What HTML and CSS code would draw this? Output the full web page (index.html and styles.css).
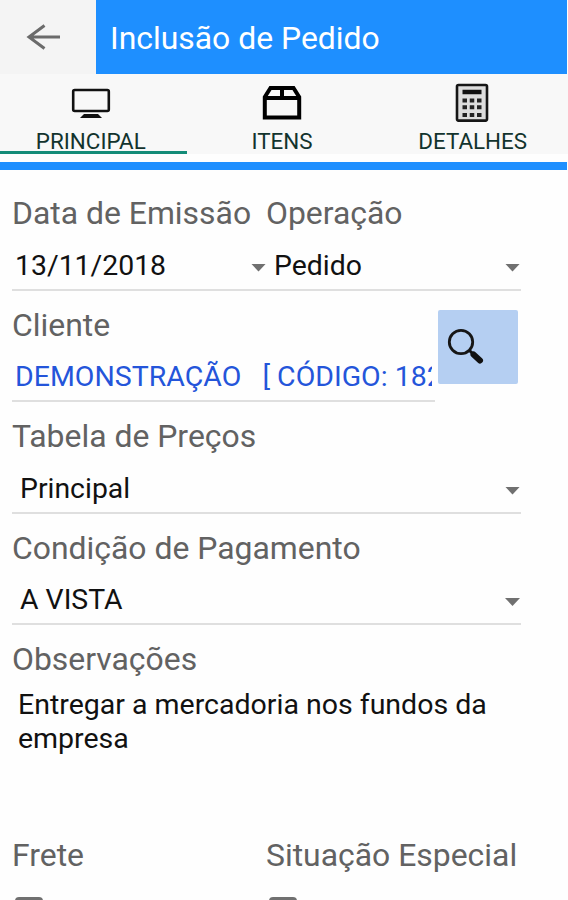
FILE: index.html
```
<!DOCTYPE html>
<html lang="pt-br">

<head>
    <meta charset="UTF-8">
    <meta name="viewport" content="width=device-width, initial-scale=1.0">
    <title>Inclusão de Pedido</title>
    <link rel="stylesheet" href="styles.css">
</head>

<body>
    <div class="header">
        <div class="back">
            <svg width="36" height="28" viewBox="0 0 36 28">
                <path d="M34 14H3M18.5 2.5L3 14L18.5 25.5" fill="none" stroke="#6b6b6b" stroke-width="3" />
            </svg>
        </div>
        <div class="title">Inclusão de Pedido</div>
    </div>
    <div class="tabs">
        <div class="tab tab-active">
            <svg class="tab-icon" width="40" height="40" viewBox="0 0 40 40">
                <rect x="2.2" y="7" width="35.6" height="21" rx="1.5" fill="none" stroke="#111" stroke-width="2.6" />
                <path d="M13 31H27L31 35H9Z" fill="#111" />
            </svg>
            <span class="tab-text">PRINCIPAL</span>
        </div>
        <div class="tab">
            <svg class="tab-icon" width="40" height="40" viewBox="0 0 40 40">
                <path d="M2.8 34.5V14L8.5 5H31.5L37.2 14V34.5Z M2.8 15H37.2M20 5V15" fill="none" stroke="#000" stroke-width="4" />
            </svg>
            <span class="tab-text">ITENS</span>
        </div>
        <div class="tab">
            <svg class="tab-icon" width="40" height="40" viewBox="0 0 40 40">
                <rect x="4" y="2" width="30" height="35.6" rx="1.5" fill="#ddd" stroke="#161616" stroke-width="2.6" />
                <path d="M9.5 9H28.5" stroke="#111" stroke-width="4.5" />
                <path d="M9.5 17.5H28.5M9.5 24.3H28.5M9.5 32H28.5" stroke="#222" stroke-width="4" stroke-dasharray="4.5 2.75" />
            </svg>
            <span class="tab-text">DETALHES</span>
        </div>
    </div>
    <div class="bar"></div>

    <div class="form">
        <div class="field field-double">
            <div class="col-left">
                <div class="label">Data de Emissão</div>
                <div class="value value-data"><span>13/11/2018</span><i class="arrow"></i></div>
            </div>
            <div class="col-right">
                <div class="label">Operação</div>
                <div class="value value-select"><span>Pedido</span><i class="arrow"></i></div>
            </div>
        </div>
        <div class="client">
            <div class="field field-client">
                <div class="label">Cliente</div>
                <div class="value value-client"><span>DEMONSTRAÇÃO&nbsp;&nbsp; [ CÓDIGO: 182</span></div>
            </div>
            <button class="btn-search">
                <svg width="38" height="38" viewBox="0 0 38 38">
                    <circle cx="14" cy="14" r="11.7" fill="none" stroke="#161616" stroke-width="2.8" />
                    <path d="M22 22L27 27" stroke="#111" stroke-width="3" />
                    <path d="M26.5 26.5L33 32.5" stroke="#111" stroke-width="6" stroke-linecap="round" />
                </svg>
            </button>
        </div>
        <div class="field">
            <div class="label">Tabela de Preços</div>
            <div class="value value-select"><span>Principal</span><i class="arrow"></i></div>
        </div>
        <div class="field">
            <div class="label">Condição de Pagamento</div>
            <div class="value value-select"><span>A VISTA</span><i class="arrow"></i></div>
        </div>
        <div class="notes">
            <div class="label">Observações</div>
            <div class="notes-text">Entregar a mercadoria nos fundos da empresa</div>
        </div>
        <div class="options">
            <div class="col-left">
                <div class="label">Frete</div>
                <span class="checkbox"></span>
            </div>
            <div class="col-right">
                <div class="label">Situação Especial</div>
                <span class="checkbox"></span>
            </div>
        </div>
    </div>
</body>

</html>
```
FILE: styles.css
```
* {
    margin: 0;
    padding: 0;
    box-sizing: border-box;
}

body {
    height: 900px;
    overflow: hidden;
    background-color: #fefefe;
    font-family: Roboto, "Liberation Sans", sans-serif;
}

/* header */
.header {
    display: flex;
    height: 74px;
    padding-right: 1px;
}

.back {
    width: 96px;
    padding: 23px 0 0 26px;
    background-color: #f4f4f4;
}

.title {
    flex: 1;
    padding-left: 14px;
    line-height: 77px;
    font-size: 31.9px;
    color: #fff;
    background-color: #1e8fff;
}

/* tabs */
.tabs {
    display: flex;
    height: 80px;
    background-color: #f8f8f8;
}

.tab {
    display: flex;
    flex-direction: column;
    align-items: center;
    width: 191px;
    padding-top: 9px;
}

.tab-active {
    width: 187px;
    padding-right: 5px;
    border-bottom: 3px solid #148c78;
}

.tab-icon {
    flex: none;
}

.tab-text {
    line-height: 36px;
    font-size: 22.4px;
    color: #12332d;
}

.bar {
    height: 8px;
    margin: 8px 1px 0 0;
    background-color: #1e8fff;
}

/* form */
.form {
    padding: 9px 47px 0 12px;
}

.field {
    height: 111.5px;
    border-bottom: 2px solid #dfdfdf;
}

.field-double,
.options {
    display: flex;
}

.col-left {
    width: 254px;
}

.col-right {
    flex: 1;
}

.label {
    height: 64px;
    line-height: 68.6px;
    font-size: 31.9px;
    color: #626262;
    white-space: nowrap;
}

.value {
    display: flex;
    justify-content: space-between;
    align-items: center;
    height: 44px;
    font-size: 28.4px;
    color: #111;
    white-space: nowrap;
}

.value-data {
    padding-left: 3px;
}

.value-select {
    padding-left: 8px;
}

.arrow {
    width: 15px;
    height: 8px;
    margin: 5px 1px 0 0;
    background-color: #707070;
    clip-path: polygon(0 0, 100% 0, 50% 100%);
}

.value-data .arrow {
    margin-right: 0;
}

.client {
    display: flex;
}

.field-client {
    width: 423px;
}

/* long names are cut at the end of the field */
.value-client {
    width: 417px;
    margin-left: 3px;
    overflow: hidden;
    font-size: 28.5px;
    color: #2455da;
}

.btn-search {
    display: flex;
    align-items: flex-start;
    width: 80px;
    height: 74px;
    margin: 19px 0 0 3px;
    padding: 18px 0 0 9px;
    border: none;
    border-radius: 2px;
    background-color: #b5cff2;
}

.notes {
    height: 196px;
}

.notes .label {
    height: 63px;
}

.notes-text {
    width: 490px;
    padding-left: 6px;
    line-height: 33.5px;
    font-size: 28.5px;
    color: #111;
}

.checkbox {
    display: block;
    width: 28px;
    height: 28px;
    margin: 12px 0 0 3px;
    border: 3px solid #707070;
    border-radius: 4px;
}
```
